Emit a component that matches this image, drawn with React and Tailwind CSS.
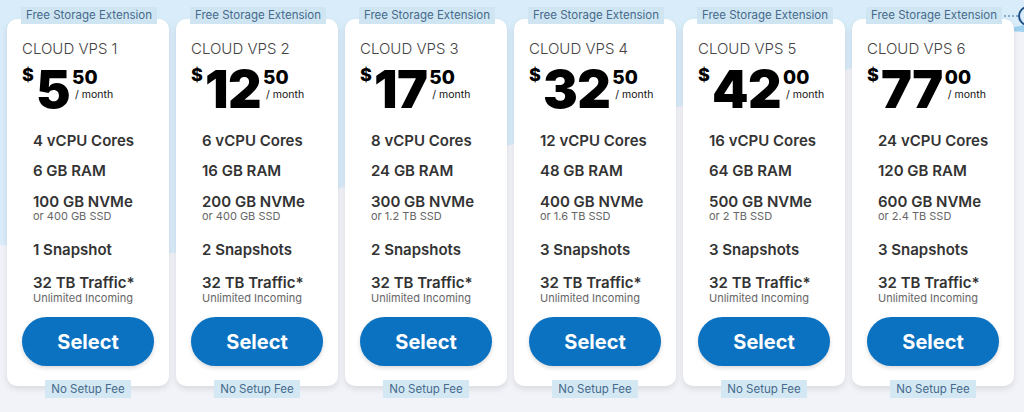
import React from "react";

const plans = [
  { name: "CLOUD VPS 1", d: "5", c: "50", cpu: "4 vCPU Cores", ram: "6 GB RAM", nvme: "100 GB NVMe", ssd: "or 400 GB SSD", snap: "1 Snapshot" },
  { name: "CLOUD VPS 2", d: "12", c: "50", cpu: "6 vCPU Cores", ram: "16 GB RAM", nvme: "200 GB NVMe", ssd: "or 400 GB SSD", snap: "2 Snapshots" },
  { name: "CLOUD VPS 3", d: "17", c: "50", cpu: "8 vCPU Cores", ram: "24 GB RAM", nvme: "300 GB NVMe", ssd: "or 1.2 TB SSD", snap: "2 Snapshots" },
  { name: "CLOUD VPS 4", d: "32", c: "50", cpu: "12 vCPU Cores", ram: "48 GB RAM", nvme: "400 GB NVMe", ssd: "or 1.6 TB SSD", snap: "3 Snapshots" },
  { name: "CLOUD VPS 5", d: "42", c: "00", cpu: "16 vCPU Cores", ram: "64 GB RAM", nvme: "500 GB NVMe", ssd: "or 2 TB SSD", snap: "3 Snapshots" },
  { name: "CLOUD VPS 6", d: "77", c: "00", cpu: "24 vCPU Cores", ram: "120 GB RAM", nvme: "600 GB NVMe", ssd: "or 2.4 TB SSD", snap: "3 Snapshots" },
];

function Card({ p }) {
  return (
    <div className="relative w-[162px] shrink-0">
      <div className="absolute left-[14px] top-[-12px] z-10 h-[17px] px-[5px] bg-[#cfe6f2] text-[#46698c] text-[11.5px] leading-[17px] whitespace-nowrap">
        Free Storage Extension
      </div>
      <div className="h-[367px] rounded-[10px] bg-white shadow-[0_3px_6px_rgba(0,0,0,0.10)] flex flex-col pt-[20px]">
        <div className="pl-[15px] text-[15px] leading-[20px] text-[#444] font-light">{p.name}</div>
        <div className="pl-[15px] mt-[4px] flex items-start text-black">
          <span className="text-[18px] leading-[18px] font-extrabold mt-[3px]">$</span>
          <span className="text-[52px] leading-[53px] font-black ml-[2px] tracking-[-0.5px]">{p.d}</span>
          <div className="flex flex-col ml-[2px] mt-[5px]">
            <span className="text-[19px] leading-[19px] font-extrabold">{p.c}</span>
            <span className="text-[10.5px] leading-[12px] mt-[2px] ml-[3px] text-[#111]">/ month</span>
          </div>
        </div>
        <div className="pl-[26px] mt-[15px] text-[#333]">
          <div className="text-[15px] leading-[20px] font-semibold">{p.cpu}</div>
          <div className="text-[15px] leading-[20px] font-semibold mt-[10px]">{p.ram}</div>
          <div className="text-[15px] leading-[20px] font-semibold mt-[11px]">{p.nvme}</div>
          <div className="text-[11px] leading-[13px] text-[#666] mt-[-2px]">{p.ssd}</div>
          <div className="text-[15px] leading-[20px] font-semibold mt-[17px]">{p.snap}</div>
          <div className="text-[15px] leading-[20px] font-semibold mt-[13px]">32 TB Traffic*</div>
          <div className="text-[11px] leading-[13px] text-[#666] mt-[-1px]">Unlimited Incoming</div>
        </div>
        <div className="px-[15px] mt-[12px]">
          <button className="w-full h-[49px] rounded-full bg-[#0b72c1] text-white text-[20px] font-bold shadow-[0_2px_4px_rgba(0,0,0,0.15)]">
            Select
          </button>
        </div>
      </div>
      <div className="flex justify-center mt-[-6px] relative z-10">
        <div className="h-[18px] px-[6px] bg-[#d3e8f3] text-[#46698c] text-[11.5px] leading-[18px] whitespace-nowrap">No Setup Fee</div>
      </div>
    </div>
  );
}

export default function App() {
  return (
    <div className="relative w-[1024px] h-[412px] overflow-hidden bg-[#f1f3f8]" style={{ fontFamily: "Inter, 'Noto Sans', sans-serif" }}>
      <svg className="absolute inset-0" width="1024" height="412" viewBox="0 0 1024 412">
        <path d="M0 0 H1024 V30 L1000 35 C 760 90, 470 150, 340 188 C 270 208, 220 255, 170 253 L0 245 Z" fill="#d9ecf9" />
        <line x1="996" y1="16" x2="1018" y2="16" stroke="#3a6ea5" strokeWidth="1" strokeDasharray="2 2" />
        <circle cx="1028" cy="16" r="9" fill="none" stroke="#1d4f86" strokeWidth="2" />
        <path d="M1000 30 L1024 25 L1024 32 Z" fill="#9fd0f0" />
      </svg>
      <div className="relative flex gap-[7px] pl-[7px] pt-[19px]">
        {plans.map((p) => (
          <Card key={p.name} p={p} />
        ))}
      </div>
    </div>
  );
}
